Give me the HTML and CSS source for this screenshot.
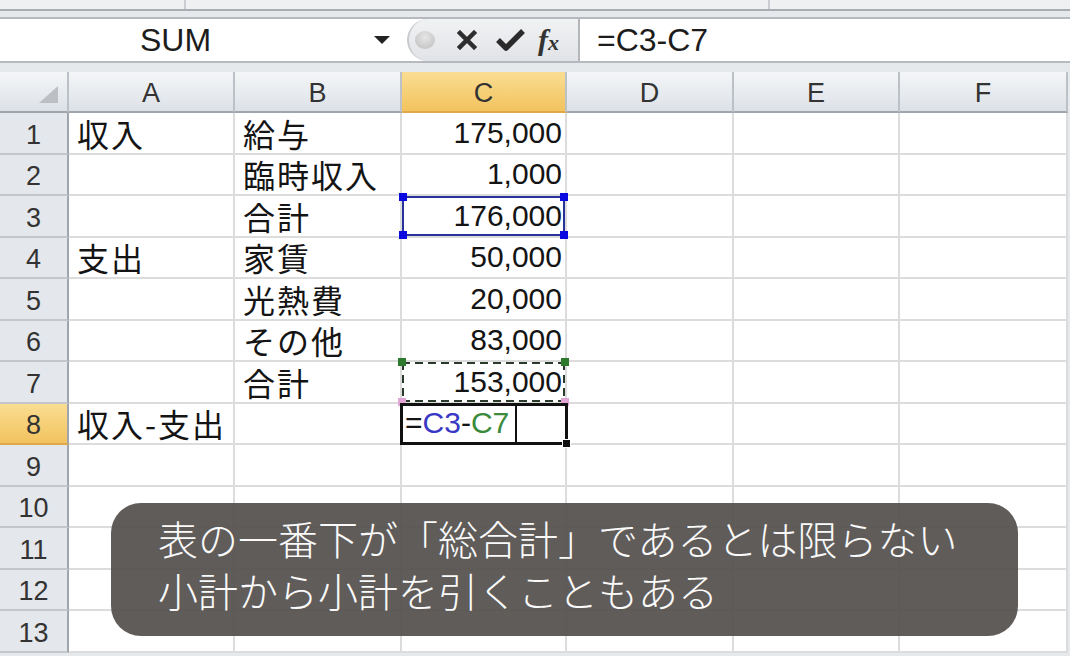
FILE: index.html
```html
<!DOCTYPE html>
<html lang="ja">
<head>
	<meta charset="UTF-8">
	<title>収入-支出</title>
	<link rel="stylesheet" href="styles.css">
</head>
<body>
	<div class="top">
		<span class="seg1"></span>
		<span class="seg2"></span>
	</div>
	<div class="fbar">
		<div class="namebox">
			<span class="name">SUM</span>
			<span class="drop"></span>
		</div>
		<div class="btns">
			<span class="grip"></span>
			<svg class="cancel" width="20" height="20" viewBox="0 0 20 20">
				<path d="M3 3 L17 17 M17 3 L3 17" stroke="#2e2e2e" stroke-width="4.5" stroke-linecap="square"/>
			</svg>
			<svg class="enter" width="31" height="24" viewBox="0 0 31 24">
				<path d="M3 12 L11 20 L28 3" stroke="#2a2a2a" stroke-width="5.5" fill="none" stroke-linejoin="round"/>
			</svg>
			<span class="fx">f<i>x</i></span>
		</div>
		<div class="formula">=C3-C7</div>
	</div>
	<div class="gap"></div>

	<div class="sheet">
		<div class="ch corner"><svg width="19" height="17" viewBox="0 0 19 17"><polygon points="19,0 19,17 0,17" fill="#bcc0c5"/></svg></div>
		<div class="ch">A</div>
		<div class="ch">B</div>
		<div class="ch on">C</div>
		<div class="ch">D</div>
		<div class="ch">E</div>
		<div class="ch">F</div>

		<div class="rh">1</div>
		<div class="jp">収入</div>
		<div class="jp">給与</div>
		<div class="num">175,000</div>
		<div></div><div></div><div></div>

		<div class="rh">2</div>
		<div></div>
		<div class="jp">臨時収入</div>
		<div class="num">1,000</div>
		<div></div><div></div><div></div>

		<div class="rh">3</div>
		<div></div>
		<div class="jp">合計</div>
		<div class="num ref">176,000
			<span class="box-blue"><i class="h tl"></i><i class="h tr"></i><i class="h bl"></i><i class="h br"></i></span>
		</div>
		<div></div><div></div><div></div>

		<div class="rh">4</div>
		<div class="jp">支出</div>
		<div class="jp">家賃</div>
		<div class="num">50,000</div>
		<div></div><div></div><div></div>

		<div class="rh">5</div>
		<div></div>
		<div class="jp">光熱費</div>
		<div class="num">20,000</div>
		<div></div><div></div><div></div>

		<div class="rh">6</div>
		<div></div>
		<div class="jp">その他</div>
		<div class="num">83,000</div>
		<div></div><div></div><div></div>

		<div class="rh">7</div>
		<div></div>
		<div class="jp">合計</div>
		<div class="num ref">153,000
			<span class="box-green"><i class="h tl"></i><i class="h tr"></i><i class="h bl"></i><i class="h br"></i></span>
		</div>
		<div></div><div></div><div></div>

		<div class="rh on">8</div>
		<div class="jp">収入-支出</div>
		<div></div>
		<div class="edit ref">=<b class="c3">C3</b>-<b class="c7">C7</b><span class="caret"></span>
			<span class="box-active"><i class="fill"></i></span>
		</div>
		<div></div><div></div><div></div>

		<div class="rh">9</div>
		<div></div><div></div><div></div><div></div><div></div><div></div>
		<div class="rh">10</div>
		<div></div><div></div><div></div><div></div><div></div><div></div>
		<div class="rh">11</div>
		<div></div><div></div><div></div><div></div><div></div><div></div>
		<div class="rh">12</div>
		<div></div><div></div><div></div><div></div><div></div><div></div>
		<div class="rh">13</div>
		<div></div><div></div><div></div><div></div><div></div><div></div>
	</div>

	<div class="caption">
		<p>表の一番下が「総合計」であるとは限らない</p>
		<p>小計から小計を引くこともある</p>
	</div>
</body>
</html>
```

FILE: styles.css
```css
*{
	margin: 0;
	padding: 0;
	box-sizing: border-box;
}
body{
	width: 1070px;
	height: 656px;
	overflow: hidden;
	position: relative;
	background: #e6e9ec;
	font-family: "Liberation Sans", "Noto Sans CJK JP", sans-serif;
	color: #141414;
}

/* window edge above the formula bar */
.top{
	height: 11px;
	display: flex;
	background: #eef0f2;
	border-bottom: 2px solid #a9adb2;
}
.top span{
	border-right: 2px solid #c9cdd2;
}
.top .seg1{ width: 186px; }
.top .seg2{ width: 584px; }

/* formula bar */
.fbar{
	margin-top: 6px;
	height: 46px;
	display: flex;
	background: #fff;
	border-top: 2px solid #b6babf;
	border-bottom: 2px solid #b6babf;
}
.namebox{
	width: 407px;
	display: flex;
	align-items: center;
}
.name{
	width: 351px;
	text-align: center;
	font-size: 32px;
	color: #1c1c1c;
}
.drop{
	margin-left: 23px;
	width: 0;
	height: 0;
	border-left: 8px solid transparent;
	border-right: 8px solid transparent;
	border-top: 8px solid #222;
}
.btns{
	width: 173px;
	display: flex;
	align-items: center;
	background: linear-gradient(#f1f2f4, #e1e3e6);
	border-radius: 22px 0 0 22px;
	border-left: 2px solid #c6c9cd;
	border-right: 2px solid #b3b7bc;
}
.grip{
	width: 20px;
	height: 18px;
	margin-left: 6px;
	border-radius: 50%;
	background: radial-gradient(circle at 50% 35%, #e6e6e6, #bcbcbc);
}
.cancel{ margin-left: 22px; }
.enter{ margin-left: 18px; }
.fx{
	margin-left: 12px;
	font-family: "Liberation Serif", serif;
	font-style: italic;
	font-weight: bold;
	font-size: 30px;
	color: #333;
}
.fx i{
	font-size: 22px;
}
.formula{
	flex: 1;
	display: flex;
	align-items: center;
	padding-left: 17px;
	font-size: 32px;
	color: #1c1c1c;
}
.gap{
	height: 9px;
}

/* grid */
.sheet{
	width: 1068px;
	display: grid;
	grid-template-columns: 69px 166px 167px 165px 167px 166px 168px;
	grid-template-rows: 41px repeat(6, 42px 41px) 42px;
	background: #fff;
}
.sheet > div{
	display: flex;
	align-items: flex-end;
	padding: 0 8px 3px;
	border-right: 2px solid #dcdcdc;
	border-bottom: 2px solid #dcdcdc;
	font-size: 30px;
	white-space: nowrap;
}
.sheet > .ch{
	justify-content: center;
	align-items: center;
	padding: 4px 0 0;
	background: linear-gradient(#f4f6f8, #dde1e6);
	border-right: 2px solid #bcc1c7;
	border-bottom: 2px solid #9fa5ac;
	font-size: 27px;
	color: #333;
}
.sheet > .corner{
	justify-content: flex-end;
	align-items: flex-end;
	padding: 0 9px 8px 0;
}
.sheet > .rh{
	justify-content: center;
	align-items: center;
	padding: 4px 0 0;
	background: #e4e7eb;
	border-right: 2px solid #9fa5ac;
	border-bottom: 2px solid #c3c7cc;
	font-size: 27px;
	color: #333;
}
.sheet > .on{
	background: linear-gradient(#fadd92, #f2c35e);
	border-bottom-color: #e0a848;
}
.sheet > .jp{
	font-family: "Noto Sans CJK JP", sans-serif;
	font-size: 32px;
	letter-spacing: 2px;
	padding-bottom: 3px;
	line-height: 34px;
}
.sheet > .num{
	justify-content: flex-end;
	padding-right: 3px;
}
.sheet > .ref{
	position: relative;
}
.sheet > .edit{
	padding-left: 3px;
}
.c3{ font-weight: normal; color: #3838c4; }
.c7{ font-weight: normal; color: #3c8a3c; }
.caret{
	display: inline-block;
	width: 2px;
	height: 37px;
	margin: 0 0 -2px 6px;
	background: #111;
}

/* reference boxes over the cells */
.box-blue, .box-green, .box-active{
	position: absolute;
}
.box-blue{
	inset: 0;
	border: 2px solid #27339a;
}
.box-green{
	inset: 0;
	background:
		repeating-linear-gradient(90deg, #2b3a2b 0 8px, transparent 8px 13px) top / 100% 2px no-repeat,
		repeating-linear-gradient(90deg, #2b3a2b 0 8px, transparent 8px 13px) bottom / 100% 2px no-repeat,
		repeating-linear-gradient(180deg, #2b3a2b 0 8px, transparent 8px 13px) left / 2px 100% no-repeat,
		repeating-linear-gradient(180deg, #2b3a2b 0 8px, transparent 8px 13px) right / 2px 100% no-repeat;
}
.box-active{
	top: -1px;
	left: -2px;
	right: -3px;
	bottom: -2px;
	border: 3px solid #111;
}
.h{
	position: absolute;
	width: 8px;
	height: 8px;
}
.box-blue .h{ background: #0a0ae0; }
.box-green .tl, .box-green .tr{ background: #2d7a2d; }
.box-green .bl, .box-green .br{ background: #e2a6d6; }
.tl{ top: -4px; left: -4px; }
.tr{ top: -4px; right: -4px; }
.bl{ bottom: -4px; left: -4px; }
.br{ bottom: -4px; right: -4px; }
.box-blue .tl, .box-blue .tr{ top: -5px; }
.box-blue .tl, .box-blue .bl{ left: -5px; }
.box-blue .tr, .box-blue .br{ right: -5px; }
.box-blue .bl, .box-blue .br{ bottom: -5px; }
.fill{
	position: absolute;
	right: -6px;
	bottom: -6px;
	width: 9px;
	height: 9px;
	background: #111;
	border: 1px solid #fff;
}

/* caption over the sheet */
.caption{
	position: absolute;
	left: 111px;
	top: 503px;
	width: 907px;
	height: 133px;
	padding: 9px 0 0 47px;
	border-radius: 30px;
	background: rgba(86, 82, 80, 0.94);
	color: #fafafa;
	font-family: "Noto Sans CJK JP", sans-serif;
	font-weight: 300;
	font-size: 40px;
	line-height: 52px;
}
```
